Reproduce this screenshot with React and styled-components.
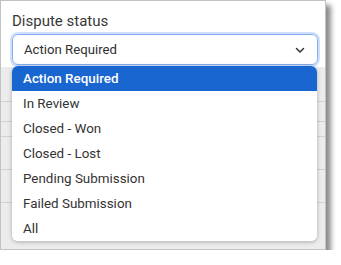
import React from "react";
import styled, { createGlobalStyle } from "styled-components";

const Global = createGlobalStyle`
  html, body { margin: 0; padding: 0; background: #ffffff; }
  body { font-family: Roboto, "Noto Sans", "Liberation Sans", sans-serif; }
`;

const Frame = styled.div`
  position: relative;
  width: 326px;
  height: 250px;
  box-sizing: border-box;
  border: 1px solid #c2c2c2;
  background: #ffffff;
  box-shadow: 5px 5px 5px rgba(0, 0, 0, 0.45);
  display: flex;
  flex-direction: column;
  overflow: hidden;
`;

const Header = styled.div`
  padding: 12px 7px 0 11px;
  height: 66px;
  box-sizing: border-box;
  display: flex;
  flex-direction: column;
  gap: 4px;
`;

const Label = styled.div`
  font-size: 15px;
  line-height: 17px;
  color: #383838;
`;

const Select = styled.div`
  height: 31px;
  width: 306px;
  box-sizing: border-box;
  border: 1px solid #84aef2;
  border-radius: 6px;
  box-shadow: 0 0 0 2px #cfe0fb;
  display: flex;
  align-items: center;
  justify-content: space-between;
  padding: 0 11px 0 11px;
  font-size: 13.2px;
  color: #2f2f2f;
`;

const Chevron = styled.svg`
  width: 12px;
  height: 12px;
  display: block;
`;

const Table = styled.div`
  flex: 1;
  background: #ececec;
  display: flex;
  flex-direction: column;
`;

const TableRow = styled.div`
  height: ${(p) => p.h}px;
  border-bottom: 1px solid #d2d2d2;
  box-sizing: border-box;
`;

const Menu = styled.ul`
  position: absolute;
  left: 11px;
  top: 65px;
  width: 305px;
  margin: 0;
  padding: 0;
  list-style: none;
  background: #ffffff;
  border-radius: 6px;
  box-shadow: 0 1px 4px rgba(0, 0, 0, 0.28);
  overflow: hidden;
`;

const Option = styled.li`
  height: 25px;
  display: flex;
  align-items: center;
  padding-left: 11px;
  font-size: 13.4px;
  color: ${(p) => (p.active ? "#ffffff" : "#333333")};
  background: ${(p) => (p.active ? "#1a66d1" : "#ffffff")};
  font-weight: ${(p) => (p.active ? 500 : 400)};
`;

const options = [
  "Action Required",
  "In Review",
  "Closed - Won",
  "Closed - Lost",
  "Pending Submission",
  "Failed Submission",
  "All",
];

const rows = [35, 20, 15, 33, 33];

export default function App() {
  return (
    <>
      <Global />
      <Frame>
        <Header>
          <Label>Dispute status</Label>
          <Select>
            <span>Action Required</span>
            <Chevron viewBox="0 0 12 12">
              <path d="M2.5 4.5 L6 8 L9.5 4.5" fill="none" stroke="#333" strokeWidth="1.5" strokeLinecap="round" strokeLinejoin="round" />
            </Chevron>
          </Select>
        </Header>
        <Table>
          {rows.map((h, i) => (
            <TableRow key={i} h={h} />
          ))}
        </Table>
        <Menu>
          {options.map((o, i) => (
            <Option key={o} active={i === 0}>
              {o}
            </Option>
          ))}
        </Menu>
      </Frame>
    </>
  );
}
